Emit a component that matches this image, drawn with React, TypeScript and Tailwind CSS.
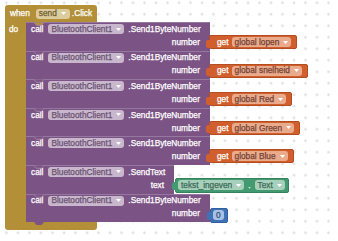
import React from "react";

function Arrow({ c }: { c: string }) {
  return (
    <svg width="5" height="3" viewBox="0 0 5 3" className="ml-[4px] flex-none">
      <path d="M0 0H5L2.5 3Z" fill={c} />
    </svg>
  );
}

function Pill({
  text,
  cls,
  arrow = true,
  arrowColor = "#ffffff",
}: {
  text: string;
  cls: string;
  arrow?: boolean;
  arrowColor?: string;
}) {
  return (
    <div className={`flex h-[10px] flex-none items-center rounded-[3px] px-[3px] ${cls}`}>
      <span className="leading-none whitespace-nowrap">{text}</span>
      {arrow && <Arrow c={arrowColor} />}
    </div>
  );
}

function Tab({ cls }: { cls: string }) {
  return <div className={`absolute left-[-4px] top-[3.5px] h-[8px] w-[5px] rounded-l-[2px] ${cls}`} />;
}

function GetVar({ name }: { name: string }) {
  return (
    <div className="relative ml-[-1px] flex h-[14px] w-max items-center gap-[3px] rounded-[2px] bg-[#d05f2d] pl-[7px] pr-[5px] border border-[#b44d20]">
      <Tab cls="bg-[#d05f2d]" />
      <span className="text-white leading-none">get</span>
      <Pill text={name} cls="bg-[#eaaa8c] text-[#744234]" />
    </div>
  );
}

function Notch({ fill }: { fill: string }) {
  return (
    <svg width="10" height="4" viewBox="0 0 10 4" className="absolute left-[8px] top-[-1px]">
      <path d="M0 0.5L2.5 3.3H7.5L10 0.5" fill={fill} stroke="#a98fb0" strokeWidth="0.8" />
    </svg>
  );
}

function Call({
  method,
  label,
  wide,
  first,
  children,
}: {
  method: string;
  label: string;
  wide: boolean;
  first?: boolean;
  children: React.ReactNode;
}) {
  return (
    <div
      className={`relative flex h-[28.6px] flex-col border-t border-[#9578a0] bg-[#7c5385] ${
        wide ? "w-[184px]" : "w-[148px]"
      }`}
    >
      <Notch fill={first ? "#b38f38" : "#7c5385"} />
      <div className="flex h-[12px] items-center pl-[5px]">
        <span className="text-white leading-none">call</span>
        <div className="ml-[5px]">
          <Pill text="BluetoothClient1" cls="bg-[#c9b7cd] text-[#6a5271]" />
        </div>
        <span className="ml-[4px] text-white leading-none whitespace-nowrap">{method}</span>
      </div>
      <div className="flex h-[15px] items-start">
        <div className="flex h-[14px] flex-1 items-center justify-end pr-[10px]">
          <span className="text-white leading-none">{label}</span>
        </div>
        <div className="relative w-0 flex-none">{children}</div>
      </div>
    </div>
  );
}

export default function App() {
  return (
    <div className="relative h-[241px] w-[338px] overflow-hidden bg-white font-['Liberation_Sans',Arial,sans-serif] text-[8.3px] [-webkit-text-stroke:0.25px_currentColor]">
      <svg className="absolute inset-0" width="338" height="241">
        <defs>
          <pattern
            id="grid"
            width="11.5"
            height="11.5"
            patternUnits="userSpaceOnUse"
            patternTransform="translate(0.5 -3)"
          >
            <path d="M4.5 5.75H7.5M6 4.25V7.25" stroke="#d9d9d9" strokeWidth="1" />
          </pattern>
        </defs>
        <rect width="338" height="241" fill="url(#grid)" />
      </svg>

      <div className="absolute left-[5px] top-[5px] flex flex-col">
        {/* header */}
        <div className="flex h-[17px] w-[92px] items-center rounded-t-[3px] bg-[#b38f38] pl-[5px]">
          <span className="text-white leading-none">when</span>
          <div className="ml-[6px]">
            <Pill text="send" cls="bg-[#dccb9c] text-[#6e5c2e] pr-[4px]" />
          </div>
          <span className="ml-[2px] text-white leading-none">.Click</span>
        </div>
        {/* body */}
        <div className="flex">
          <div className="w-[21px] flex-none bg-[#b38f38] pl-[4px] pt-[1px]">
            <span className="text-white leading-none">do</span>
          </div>
          <div className="flex flex-col">
            <Call method=".Send1ByteNumber" label="number" wide first>
              <GetVar name="global lopen" />
            </Call>
            <Call method=".Send1ByteNumber" label="number" wide>
              <GetVar name="global snelheid" />
            </Call>
            <Call method=".Send1ByteNumber" label="number" wide>
              <GetVar name="global Red" />
            </Call>
            <Call method=".Send1ByteNumber" label="number" wide>
              <GetVar name="global Green" />
            </Call>
            <Call method=".Send1ByteNumber" label="number" wide>
              <GetVar name="global Blue" />
            </Call>
            <Call method=".SendText" label="text" wide={false}>
              <div className="relative ml-px flex h-[15px] w-max items-center rounded-[2px] border border-[#35825d] bg-[#439970] pl-[2px] pr-[3px]">
                <Tab cls="bg-[#439970]" />
                <Pill text="tekst_ingeven" cls="bg-[#a7d0bc] text-[#3c6a55]" />
                <span className="mx-[4px] text-white leading-none">.</span>
                <Pill text="Text" cls="bg-[#a7d0bc] text-[#3c6a55]" />
              </div>
            </Call>
            <Call method=".Send1ByteNumber" label="number" wide>
              <div className="relative mt-[1px] flex h-[15px] w-max items-center rounded-[2px] border border-[#32609f] bg-[#3f71b5] pl-[2px] pr-[3px]">
                <Tab cls="bg-[#3f71b5]" />
                <Pill text="0" cls="bg-[#a9c1e4] text-[#2d4d7c]" arrow={false} />
              </div>
            </Call>
          </div>
        </div>
        {/* bottom */}
        <div className="relative h-[8px] w-[92px] rounded-b-[3px] bg-[#b38f38]">
          <svg width="10" height="4" viewBox="0 0 10 4" className="absolute left-[29px] top-0">
            <path d="M0 0L2.5 3H7.5L10 0Z" fill="#7c5385" />
          </svg>
        </div>
      </div>
    </div>
  );
}
